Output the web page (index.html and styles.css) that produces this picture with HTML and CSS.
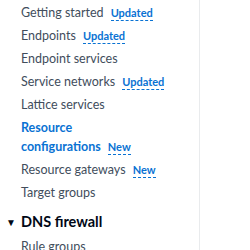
FILE: index.html
```html
<!DOCTYPE html>
<html lang="en">
<head>
  <meta charset="UTF-8" />
  <title>VPC navigation</title>
  <link rel="stylesheet" href="styles.css">
</head>
<body>

<nav class="side-nav">
  <ul class="nav-list">
    <li><a href="#">Getting started</a><span class="badge">Updated</span></li>
    <li><a href="#">Endpoints</a><span class="badge">Updated</span></li>
    <li><a href="#">Endpoint services</a></li>
    <li><a href="#">Service networks</a><span class="badge">Updated</span></li>
    <li><a href="#">Lattice services</a></li>
    <li class="active"><a class="stacked" href="#">Resource configurations</a><span class="badge">New</span></li>
    <li><a href="#">Resource gateways</a><span class="badge">New</span></li>
    <li><a href="#">Target groups</a></li>
  </ul>

  <h3 class="section-title"><span class="caret">&#9660;</span>DNS firewall</h3>
  <ul class="nav-list">
    <li><a href="#">Rule groups</a></li>
  </ul>
</nav>

</body>
</html>
```
FILE: styles.css
```css
* { margin: 0; padding: 0; box-sizing: border-box; }
body { font-family: "Lato", "Liberation Sans", sans-serif; background: #fff; color: #414d5c; overflow: hidden; }
.side-nav { width: 200px; height: 250px; border-right: 1px solid #e9ebed; padding: 1px 0 0 21px; }
.nav-list { list-style: none; }
.nav-list li { padding: 2px 0; font-size: 12.5px; line-height: 19px; }
.nav-list a { color: #414d5c; text-decoration: none; }
.nav-list li.active a { color: #0972d3; font-weight: 700; }
.nav-list a.stacked { display: inline-block; width: min-content; }
.badge { margin-left: 7px; font-size: 11px; font-weight: 700; color: #0972d3; border-bottom: 1px dashed #0972d3; line-height: 14px; display: inline-block; }
.section-title { font-size: 14.5px; font-weight: 700; color: #000716; line-height: 22px; margin: 7px 0 2px -15px; }
.caret { display: inline-block; font-size: 10px; width: 15px; vertical-align: 1px; }
```
